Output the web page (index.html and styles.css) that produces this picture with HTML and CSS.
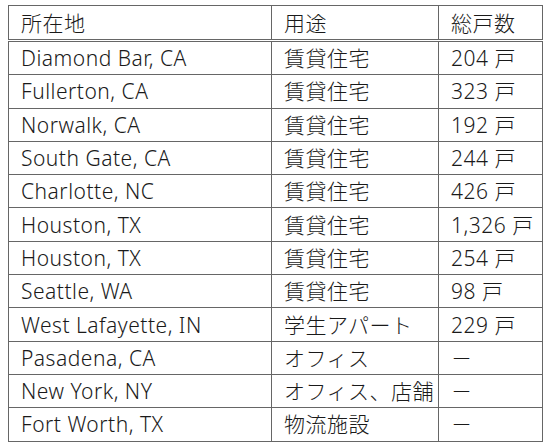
FILE: index.html
```html
<!DOCTYPE html>
<html lang="ja">
<head>
<meta charset="utf-8">
<link rel="stylesheet" href="styles.css">
</head>
<body>
<table class="props">
  <thead>
    <tr><th class="c1">所在地</th><th class="c2">用途</th><th class="c3">総戸数</th></tr>
  </thead>
  <tbody>
    <tr><td>Diamond Bar, CA</td><td>賃貸住宅</td><td>204 戸</td></tr>
    <tr><td>Fullerton, CA</td><td>賃貸住宅</td><td>323 戸</td></tr>
    <tr><td>Norwalk, CA</td><td>賃貸住宅</td><td>192 戸</td></tr>
    <tr><td>South Gate, CA</td><td>賃貸住宅</td><td>244 戸</td></tr>
    <tr><td>Charlotte, NC</td><td>賃貸住宅</td><td>426 戸</td></tr>
    <tr><td>Houston, TX</td><td>賃貸住宅</td><td>1,326 戸</td></tr>
    <tr><td>Houston, TX</td><td>賃貸住宅</td><td>254 戸</td></tr>
    <tr><td>Seattle, WA</td><td>賃貸住宅</td><td>98 戸</td></tr>
    <tr><td>West Lafayette, IN</td><td>学生アパート</td><td>229 戸</td></tr>
    <tr><td>Pasadena, CA</td><td>オフィス</td><td class="dash">－</td></tr>
    <tr><td>New York, NY</td><td>オフィス、店舗</td><td class="dash">－</td></tr>
    <tr><td>Fort Worth, TX</td><td>物流施設</td><td class="dash">－</td></tr>
  </tbody>
</table>
</body>
</html>
```

FILE: styles.css
```css
html, body {
  margin: 0;
  padding: 0;
  background: #fff;
}
body {
  padding: 5px 0 0 8px;
  font-family: "Noto Sans", "Noto Sans CJK JP", sans-serif;
  font-weight: 300;
  color: #1a1a1a;
}
.props {
  border-collapse: collapse;
  font-size: 21px;
  letter-spacing: 0.5px;
  border: 1px solid #666;
}
.props th, .props td {
  border: 1px solid #666;
  padding: 0 0 0 12px;
  height: 32.3px;
  text-align: left;
  font-weight: 300;
  white-space: nowrap;
  line-height: 22px;
}
.props th {
  height: 33px;
  border-bottom: 3px double #666;
}
.c1 { width: 250px; }
.c2 { width: 154px; }
.c3 { width: 91px; }
.dash { padding-left: 12px; }
```
